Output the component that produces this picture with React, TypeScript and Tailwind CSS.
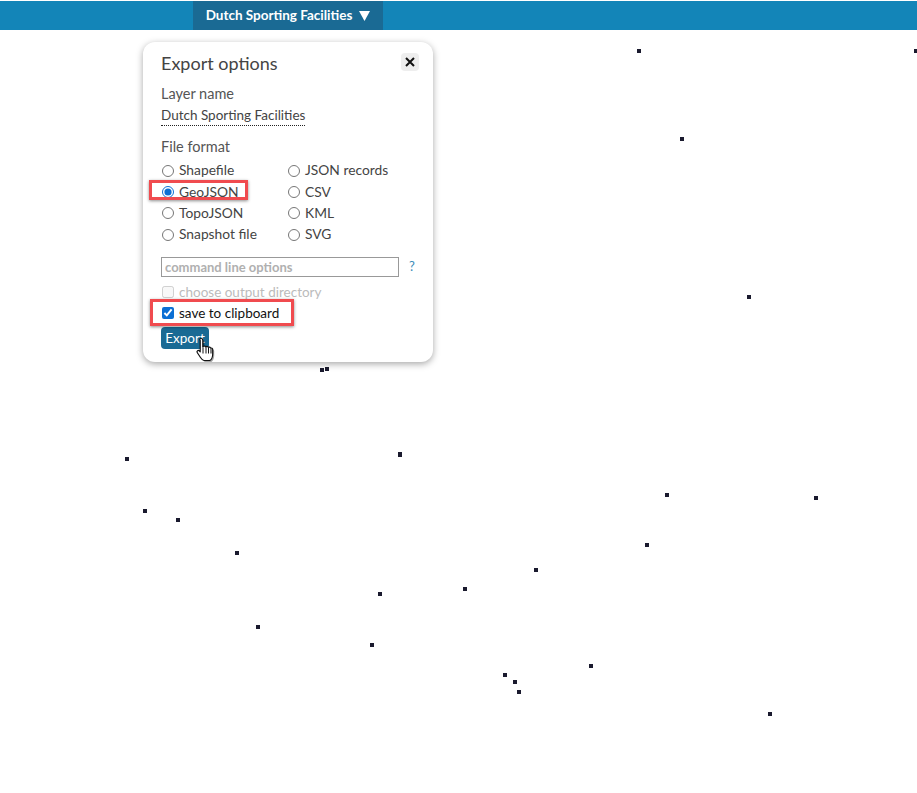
import React from 'react';

const dots = [
  [637, 49], [680, 137], [747, 295], [320, 368], [325, 367], [398, 452], [398, 453], [125, 457],
  [665, 493], [814, 496], [143, 509], [176, 518], [235, 551], [645, 543], [534, 568],
  [463, 587], [378, 592], [256, 625], [370, 643], [503, 673], [513, 680], [517, 690],
  [589, 664], [768, 712], [914, 49],
];

const formats = [
  ['Shapefile', 'JSON records'],
  ['GeoJSON', 'CSV'],
  ['TopoJSON', 'KML'],
  ['Snapshot file', 'SVG'],
];

const Radio = ({ label, checked }: { label: string; checked?: boolean }) => (
  <label className="relative flex items-center h-[21.3px] text-[13.8px] text-[#444]">
    <input type="radio" name="format" defaultChecked={checked} className="w-[12px] h-[12px] m-0 ml-[1px] mr-[5px] accent-[#0b6fd4]" />
    {label}
    {checked && (
      <span className="absolute left-[-12px] top-[-1px] w-[99px] h-[20px] border-[3px] border-[#f04b4f] shadow-[0_1px_3px_rgba(0,0,0,0.45)]" />
    )}
  </label>
);

const HandCursor = () => (
  <svg className="absolute left-[194px] top-[336px]" width="24" height="28" viewBox="0 0 24 28">
    <path
      d="M7 2.500c1 0 1.800.8 1.800 1.800V11l.6-.6c.5-.5 2-.5 2.400.4.6-.6 2-.5 2.500.5.7-.5 2-.3 2.400.8.8-.3 2 .2 2 1.500V18c0 3-1.500 6-3 6.500H10c-1.500 0-2.500-1.500-3.500-3L3.200 16.500c-.8-1.200 1-2.800 2.300-1.500l.7.800V4.300C5.200 3.300 6 2.500 7 2.500Z"
      fill="#000"
      fillOpacity="0.35"
      transform="translate(1.500 1.500)"
    />
    <path
      d="M7 2.500c1 0 1.800.8 1.800 1.800V11l.6-.6c.5-.5 2-.5 2.400.4.6-.6 2-.5 2.500.5.7-.5 2-.3 2.400.8.8-.3 2 .2 2 1.500V18c0 3-1.500 6-3 6.500H10c-1.500 0-2.500-1.500-3.500-3L3.200 16.500c-.8-1.200 1-2.800 2.300-1.500l.7.800V4.300C5.200 3.300 6 2.500 7 2.500Z"
      fill="#fff"
      stroke="#111"
      strokeWidth="1.200"
      strokeLinejoin="round"
    />
    <path d="M9 11.500v6M12 11v6.500M14.500 11.500v6M17 12.500v5" stroke="#111" strokeWidth="1" fill="none" />
  </svg>
);

export default function App() {
  return (
    <div className="relative w-[917px] h-[793px] overflow-hidden bg-white font-['Lato',sans-serif]">
      {/* top bar */}
      <div className="h-[29px] mt-[1px] pl-[193px] bg-[#1385b8] flex">
        <div className="w-[190px] flex items-center justify-center gap-[7px] bg-[#1a6a94] text-white text-[13.5px] font-bold">
          <span>Dutch Sporting Facilities</span>
          <svg width="11" height="10" viewBox="0 0 11 10"><path d="M0 0h11L5.500 10Z" fill="#fff" /></svg>
        </div>
      </div>

      {/* map points */}
      {dots.map(([x, y], i) => (
        <div key={i} className="absolute w-[4px] h-[4px] bg-[#1a1a2e]" style={{ left: x, top: y }} />
      ))}

      {/* export popup */}
      <div className="absolute left-[143px] top-[42px] w-[290px] h-[320px] rounded-[12px] bg-white shadow-[0_2px_7px_rgba(0,0,0,0.35)] pl-[18px] pr-[17px] pt-[9px]">
        <div className="absolute right-[14px] top-[11px] w-[18px] h-[18px] rounded-[4px] bg-[#eee] flex items-center justify-center">
          <svg width="10" height="10" viewBox="0 0 10 10"><path d="M1 1l8 8M9 1l-8 8" stroke="#111" strokeWidth="2" /></svg>
        </div>
        <h3 className="text-[18px] leading-[24px] text-[#444]">Export options</h3>
        <div className="mt-[9px] text-[14.500px] leading-[20px] text-[#555]">Layer name</div>
        <div className="mt-[1px] w-fit text-[13.500px] leading-[20px] text-[#444] border-b border-dotted border-[#222]">Dutch Sporting Facilities</div>
        <div className="mt-[11px] text-[14.500px] leading-[20px] text-[#555]">File format</div>
        <div className="mt-[3px] flex flex-col">
          {formats.map(([a, b]) => (
            <div key={a} className="grid grid-cols-[126px_1fr]">
              <Radio label={a} checked={a === 'GeoJSON'} />
              <Radio label={b} />
            </div>
          ))}
        </div>
        <div className="mt-[12px] flex items-center">
          <input
            readOnly
            placeholder="command line options"
            className="w-[238px] h-[20px] px-[3px] border border-[#999] bg-white text-[13px] font-bold outline-none placeholder:text-[#b0b0b0]"
          />
          <span className="ml-[10px] text-[13px] text-[#3d8cb8]">?</span>
        </div>
        <label className="mt-[5px] flex items-center h-[20px] text-[13.500px] text-[#bbb]">
          <input type="checkbox" disabled className="w-[12px] h-[12px] m-0 ml-[1px] mr-[5px]" />
          choose output directory
        </label>
        <label className="relative flex items-center h-[21px] text-[13.500px] text-[#111]">
          <input type="checkbox" defaultChecked className="w-[12px] h-[12px] m-0 ml-[1px] mr-[5px] accent-[#0b6fd4]" />
          save to clipboard
          <span className="absolute left-[-11px] top-[-3px] w-[144px] h-[27px] border-[3px] border-[#f04b4f] shadow-[0_1px_3px_rgba(0,0,0,0.45)]" />
        </label>
        <button className="mt-[4px] w-[48px] h-[22px] rounded-[4px] bg-[#1a6a94] text-white text-[13.500px] leading-[22px]">Export</button>
      </div>
      <HandCursor />
    </div>
  );
}
